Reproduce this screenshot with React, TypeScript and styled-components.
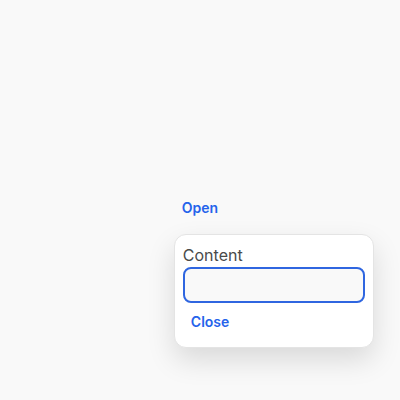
import React, { useState } from 'react';
import styled, { createGlobalStyle } from 'styled-components';

const GlobalStyle = createGlobalStyle`
  html, body {
    margin: 0;
    padding: 0;
    background: #f9f9f9;
    font-family: Inter, 'Noto Sans', sans-serif;
  }
`;

export default function App() {
  const [open, setOpen] = useState(true);

  return (
    <>
      <GlobalStyle />
      <Page>
        <Anchor>
          <TextButton onClick={() => setOpen(!open)}>Open</TextButton>
          {open && (
            <Popover>
              <Label>Content</Label>
              <Field />
              <CloseRow>
                <TextButton onClick={() => setOpen(false)}>Close</TextButton>
              </CloseRow>
            </Popover>
          )}
        </Anchor>
      </Page>
    </>
  );
}

const Page = styled.div`
  width: 400px;
  height: 400px;
  display: flex;
  justify-content: center;
  padding-top: 189px;
  box-sizing: border-box;
`;

const Anchor = styled.div`
  position: relative;
  height: 38px;
`;

const TextButton = styled.button`
  border: none;
  background: transparent;
  padding: 10px 8px;
  font-family: Inter, 'Noto Sans', sans-serif;
  font-size: 14px;
  line-height: 18px;
  font-weight: 600;
  color: #2563eb;
  cursor: pointer;
  border-radius: 6px;
`;

const Popover = styled.div`
  position: absolute;
  top: 45px;
  left: 0;
  width: 200px;
  box-sizing: border-box;
  padding: 8px 8px 6px;
  background: #ffffff;
  border: 1px solid #e4e4e4;
  border-radius: 12px;
  box-shadow: 0 12px 28px rgba(0, 0, 0, 0.13);
  display: flex;
  flex-direction: column;
`;

const Label = styled.span`
  font-size: 16px;
  line-height: 24px;
  color: #4a4a4a;
`;

const Field = styled.input`
  height: 36px;
  box-sizing: border-box;
  width: 100%;
  border: 2px solid #2f66e0;
  border-radius: 8px;
  background: #f9f9f9;
  outline: none;
  padding: 0 8px;
`;

const CloseRow = styled.div`
  display: flex;
`;
